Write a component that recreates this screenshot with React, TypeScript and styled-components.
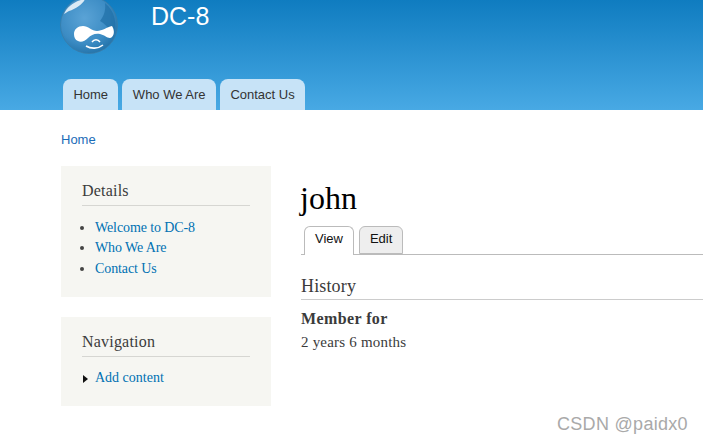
import React from "react";
import styled, { createGlobalStyle } from "styled-components";

const Global = createGlobalStyle`
  html, body { margin: 0; padding: 0; background: #fff; }
  body { font-family: "Liberation Serif", Georgia, serif; color: #3b3b3b; }
  a { text-decoration: none; }
`;
const Page = styled.div`
  width: 703px; height: 444px; overflow: hidden; position: relative; background: #fff;
`;
const Header = styled.header`
  height: 110px; box-sizing: border-box; padding-left: 60px;
  background: linear-gradient(to bottom, #0f7cc0 0%, #48a9e4 100%);
  display: flex; flex-direction: column; justify-content: space-between;
  overflow: hidden;
`;
const Brand = styled.div`
  display: flex; align-items: flex-start; margin-top: -4px;
`;
const SiteName = styled.div`
  font: 25px/30px "Liberation Sans", Arial, sans-serif; color: #fff;
  margin: 5px 0 0 33px;
`;
const PrimaryNav = styled.nav`
  display: flex; gap: 4px; padding-left: 3px;
`;
const PrimaryTab = styled.a`
  height: 31px; box-sizing: border-box; padding: 0 10.4px;
  background: #c7e3f7; border-radius: 8px 8px 0 0;
  font: 13px/31px "Liberation Sans", Arial, sans-serif; color: #333;
`;
const Crumb = styled.div`
  padding: 21px 0 0 61px; height: 56px; box-sizing: border-box;
  font: 13px/17px "Liberation Sans", Arial, sans-serif; color: #1b6cb8;
`;
const Columns = styled.div`
  display: flex; padding-left: 61px;
`;
const Sidebar = styled.aside`
  width: 210px; display: flex; flex-direction: column; gap: 20px; flex: none;
`;
const Block = styled.section<{ $h: number }>`
  height: ${p => p.$h}px; box-sizing: border-box; background: #f6f6f2;
  padding: 15px 21px 0;
`;
const BlockTitle = styled.h2`
  margin: 0; font-size: 16px; line-height: 19px; font-weight: 400; color: #3b3b3b;
  padding-bottom: 5px; border-bottom: 1px solid #d6d6d2; letter-spacing: 0.2px;
`;
const LinkList = styled.ul`
  margin: 11.5px 0 0; padding: 0 0 0 13px; list-style: disc;
  font-size: 14px; line-height: 20.5px; letter-spacing: -0.1px;
  li::marker { color: #444; }
`;
const TreeList = styled.ul`
  margin: 11px 0 0; padding: 0 0 0 13px; list-style: none;
  font-size: 14px; line-height: 20.5px;
`;
const TreeItem = styled.li`
  position: relative;
  &::before {
    content: ""; position: absolute; left: -12px; top: 6.5px;
    border-left: 5px solid #111; border-top: 4px solid transparent; border-bottom: 4px solid transparent;
  }
`;
const Link = styled.a`
  color: #0071b3;
`;
const Main = styled.main`
  flex: 1; margin-left: 30px; min-width: 0;
`;
const Title = styled.h1`
  margin: 14px 0 0 -1px; font-size: 32px; line-height: 37px; font-weight: 400; color: #000;
`;
const Tabs = styled.div`
  display: flex; gap: 5px; padding-left: 3px; margin-top: 9px; height: 29px; box-sizing: border-box;
  border-bottom: 1px solid #bbb;
`;
const Tab = styled.a<{ $active?: boolean }>`
  height: ${p => (p.$active ? 29 : 28)}px; box-sizing: border-box; padding: 0 10px;
  border: 1px solid #bbb; border-bottom: ${p => (p.$active ? "none" : "1px solid #bbb")};
  border-radius: 6px 6px 0 0;
  background: ${p => (p.$active ? "#fff" : "#eee")};
  font: 13px/24px "Liberation Sans", Arial, sans-serif; color: #111;
`;
const SectionTitle = styled.h3`
  margin: 21px 0 0; font-size: 18px; line-height: 20px; font-weight: 400; color: #3b3b3b;
  padding-bottom: 3px; border-bottom: 1px solid #ccc; letter-spacing: 0.15px;
`;
const Label = styled.div`
  margin-top: 10px; font-size: 16px; line-height: 18px; font-weight: 700; color: #3b3b3b; letter-spacing: 0.4px;
`;
const Value = styled.div`
  margin-top: 5px; font-size: 15px; line-height: 18px; color: #3b3b3b; letter-spacing: 0.2px;
`;
const Watermark = styled.div`
  position: absolute; left: 557px; top: 413px;
  font: 18px/22px "Liberation Sans", Arial, sans-serif; color: #a9a9a9; letter-spacing: 0.3px;
`;

const Logo = () => (
  <svg width="58" height="58" viewBox="0 0 58 58" aria-hidden="true">
    <defs>
      <radialGradient id="ball" cx="42%" cy="38%" r="68%">
        <stop offset="0" stopColor="#5aa3d6" />
        <stop offset="0.65" stopColor="#3c8cc4" />
        <stop offset="1" stopColor="#1f6fa6" />
      </radialGradient>
    </defs>
    <circle cx="29" cy="29" r="28.5" fill="url(#ball)" stroke="#3a7ca8" strokeWidth="0.8" />
    <path d="M45 7c10 8 13 22 8 34-3-7-6-12-13-16 4-5 6-11 5-18z" fill="#1f6fa6" opacity="0.7" />
    <path d="M4 18C7 11 14 5 25 3c-1 4-9 10-16 12-2 1-3 2-5 3z" fill="#fff" opacity="0.8" />
    <path d="M14 38C14 33 18 30 23 30C28 30 32 35 37 35C42 35 47 31 52 30C54 33 55 38 52 41C49 44 45 39 40 38C35 37 31 39 28 42C25 45 21 47 18 45C15 44 14 41 14 38Z" fill="#fff" />
    <path d="M32 46c2-3 6-3 8 0" fill="none" stroke="#fff" strokeWidth="1.4" />
    <path d="M26 50c5 3 12 3 17-1" fill="none" stroke="#fff" strokeWidth="1.6" />
  </svg>
);

export default function App() {
  return (
    <Page>
      <Global />
      <Header>
        <Brand>
          <Logo />
          <SiteName>DC-8</SiteName>
        </Brand>
        <PrimaryNav>
          <PrimaryTab>Home</PrimaryTab>
          <PrimaryTab>Who We Are</PrimaryTab>
          <PrimaryTab>Contact Us</PrimaryTab>
        </PrimaryNav>
      </Header>
      <Crumb>Home</Crumb>
      <Columns>
        <Sidebar>
          <Block $h={131}>
            <BlockTitle>Details</BlockTitle>
            <LinkList>
              <li><Link>Welcome to DC-8</Link></li>
              <li><Link>Who We Are</Link></li>
              <li><Link>Contact Us</Link></li>
            </LinkList>
          </Block>
          <Block $h={89}>
            <BlockTitle>Navigation</BlockTitle>
            <TreeList>
              <TreeItem><Link>Add content</Link></TreeItem>
            </TreeList>
          </Block>
        </Sidebar>
        <Main>
          <Title>john</Title>
          <Tabs>
            <Tab $active>View</Tab>
            <Tab>Edit</Tab>
          </Tabs>
          <SectionTitle>History</SectionTitle>
          <Label>Member for</Label>
          <Value>2 years 6 months</Value>
        </Main>
      </Columns>
      <Watermark>CSDN @paidx0</Watermark>
    </Page>
  );
}
